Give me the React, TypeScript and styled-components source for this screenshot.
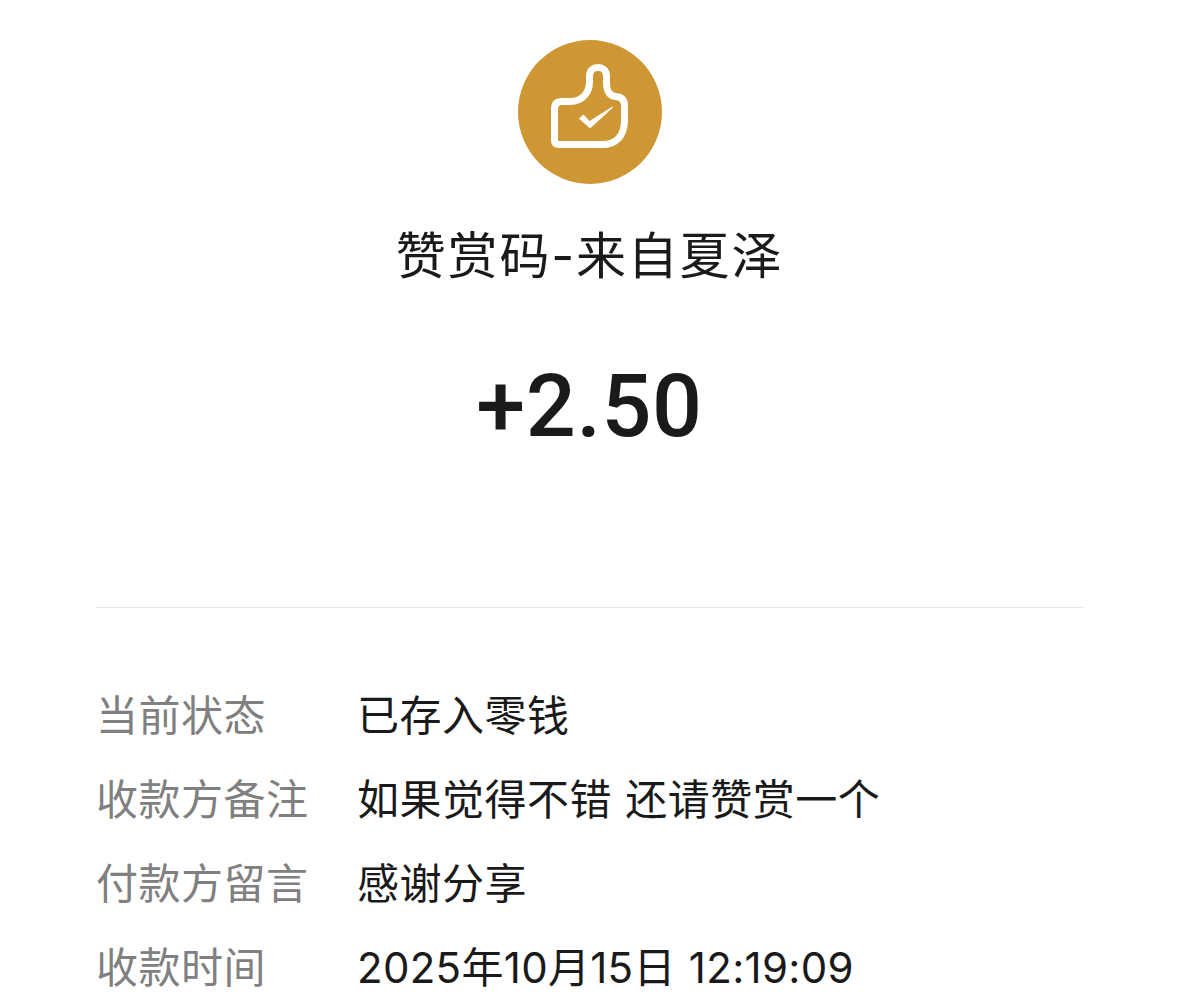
import React from "react";
import styled, { createGlobalStyle } from "styled-components";

const Global = createGlobalStyle`
  html, body { margin: 0; padding: 0; background: #fff; overflow: hidden; }
`;
const Page = styled.div`
  width: 1179px; height: 1002px; overflow: hidden; background: #fff;
  font-family: "Inter", "Noto Sans CJK SC", sans-serif;
  display: flex; flex-direction: column; align-items: center;
  padding-top: 40px; box-sizing: border-box;
`;
const Badge = styled.div`
  width: 144px; height: 144px; border-radius: 50%; background: #cf9734;
  display: flex; align-items: center; justify-content: center;
`;
const Title = styled.div`
  margin-top: 38px; font-size: 50px; line-height: 68px; color: #1a1a1a; letter-spacing: 1.8px; font-weight: 400;
`;
const Amount = styled.div`
  margin-top: 66px; font-family: "Roboto", sans-serif; font-weight: 500; font-size: 88px; line-height: 100px; color: #1a1a1a; letter-spacing: 0.6px;
`;
const Divider = styled.div`
  margin-top: 151px; width: 987px; height: 1px; background: #e5e5e5;
`;
const Rows = styled.div`
  margin-top: 78px; width: 987px; display: flex; flex-direction: column; gap: 24px;
`;
const Row = styled.div`
  display: grid; grid-template-columns: 261px 1fr; font-size: 42px; line-height: 60px; font-weight: 400; letter-spacing: 0.5px; word-spacing: 1px;
`;
const Label = styled.div` color: #808080; `;
const Value = styled.div<{ $numeric?: boolean }>`
  color: #1a1a1a;
  letter-spacing: ${(p) => (p.$numeric ? "0.3px" : "0.5px")};
`;

const rows = [
  { label: "当前状态", value: "已存入零钱" },
  { label: "收款方备注", value: "如果觉得不错 还请赞赏一个" },
  { label: "付款方留言", value: "感谢分享" },
  { label: "收款时间", value: "2025年10月15日 12:19:09", numeric: true },
];

export default function App() {
  return (
    <Page>
      <Global />
      <Badge>
        <svg width="144" height="144" viewBox="0 0 144 144" fill="none">
          <path
            d="M36.5 100 V69 C36.5 64 39 61.5 44 61.5 H52 C64 61.5 71.5 53 71.5 42 V36 C71.5 24.5 88.5 24.5 88.5 36 V42 C88.5 51 91 56 98 56.5 C103.5 57 106.5 60 106.5 66 V80 C106.5 96 98 104.5 84 104.5 H41 C38 104.5 36.5 103 36.5 100 Z"
            stroke="#fff" strokeWidth="7" strokeLinejoin="round"
          />
          <path d="M61 78.5 L65.5 74.5 L71.5 81 L94.5 66.5 L95 67.5 L72 88.5 Z" fill="#fff" />
        </svg>
      </Badge>
      <Title>赞赏码-来自夏泽</Title>
      <Amount>+2.50</Amount>
      <Divider />
      <Rows>
        {rows.map((r) => (
          <Row key={r.label}>
            <Label>{r.label}</Label>
            <Value $numeric={r.numeric}>{r.value}</Value>
          </Row>
        ))}
      </Rows>
    </Page>
  );
}
